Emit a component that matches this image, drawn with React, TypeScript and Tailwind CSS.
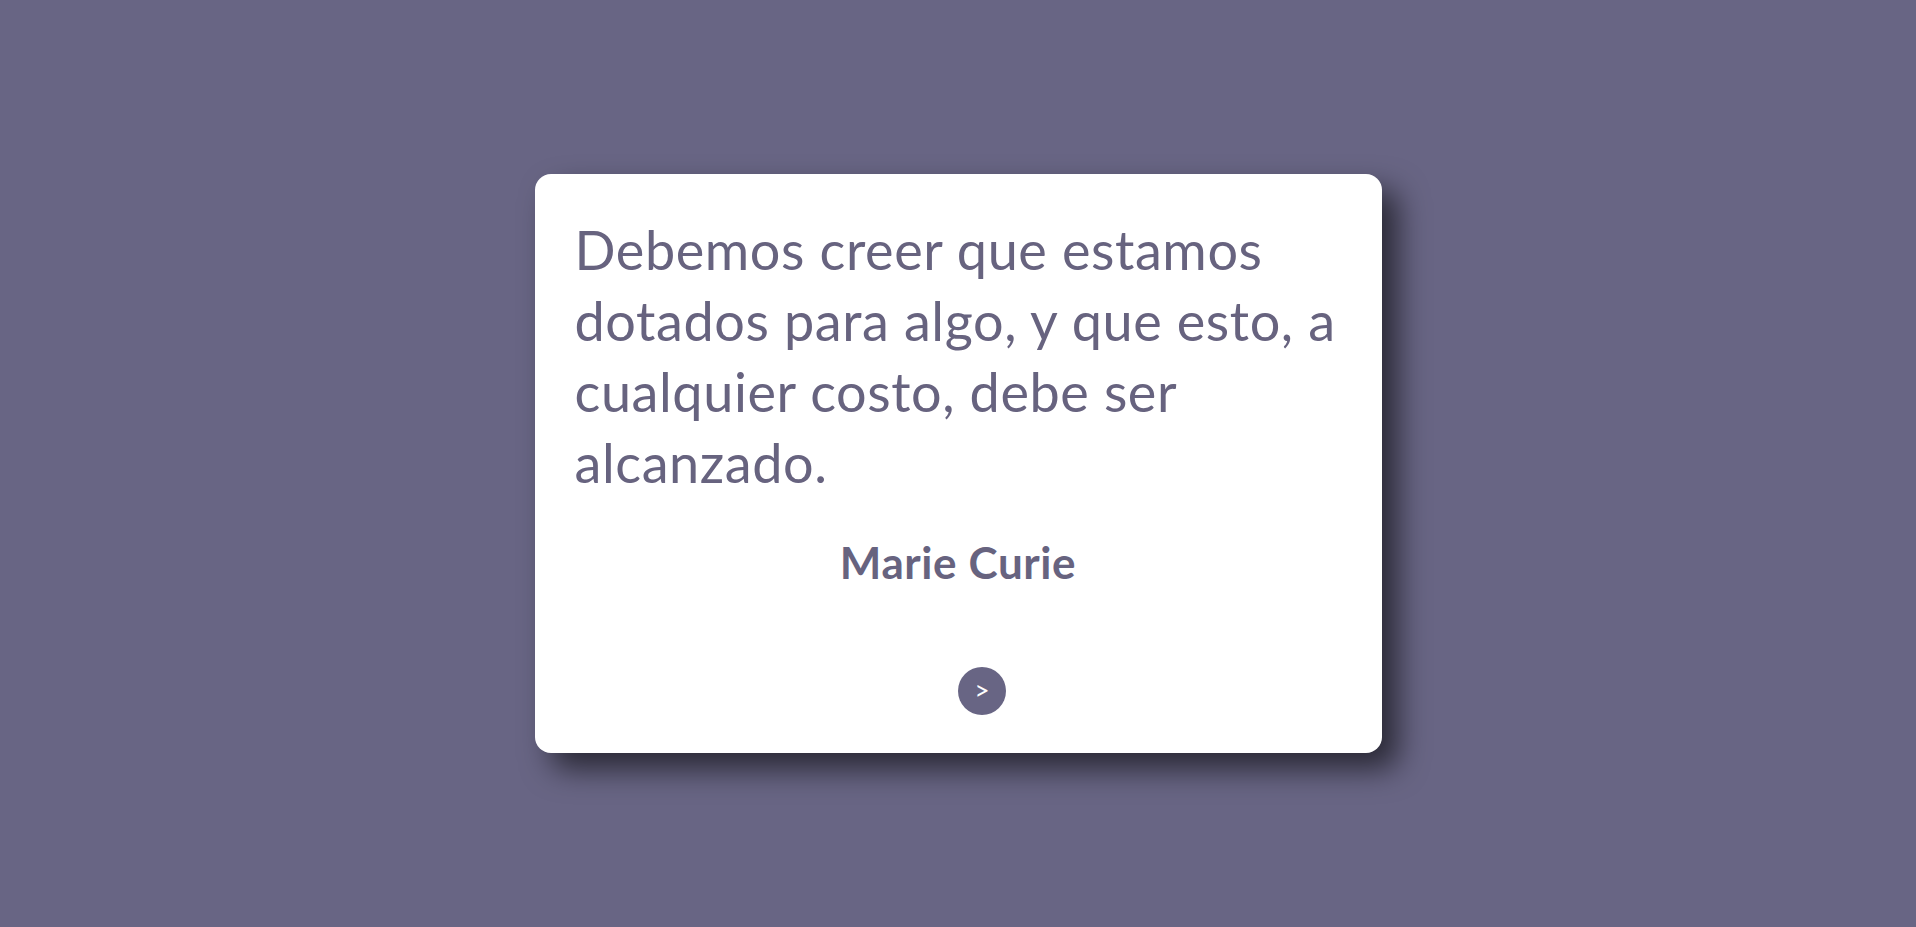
import React from "react";

const quote =
  "Debemos creer que estamos dotados para algo, y que esto, a cualquier costo, debe ser alcanzado.";

const QuoteCard = () => {
  return (
    <div className="w-[847px] rounded-2xl bg-white px-10 pt-10 pb-[38px] shadow-[16px_16px_30px_rgba(0,0,0,0.6)]">
      {/* Quote */}
      <p className="text-[54px] leading-[71px] tracking-[0.6px] text-[#67637f]">{quote}</p>

      {/* Author */}
      <p className="mt-[38px] text-center text-[44px] leading-[53px] tracking-[0.6px] font-bold text-[#67637f]">
        Marie Curie
      </p>

      {/* Next button */}
      <div className="mt-[78px] flex justify-center">
        <button className="ml-12 flex h-12 w-12 items-center justify-center rounded-full bg-[#686584] pb-[2px] text-[26px] leading-none text-white">
          &gt;
        </button>
      </div>
    </div>
  );
};

export default function App() {
  return (
    <main
      className="flex h-[927px] w-full items-center justify-center bg-[#686584]"
      style={{ fontFamily: "Lato, 'Open Sans', sans-serif" }}
    >
      <QuoteCard />
    </main>
  );
}
